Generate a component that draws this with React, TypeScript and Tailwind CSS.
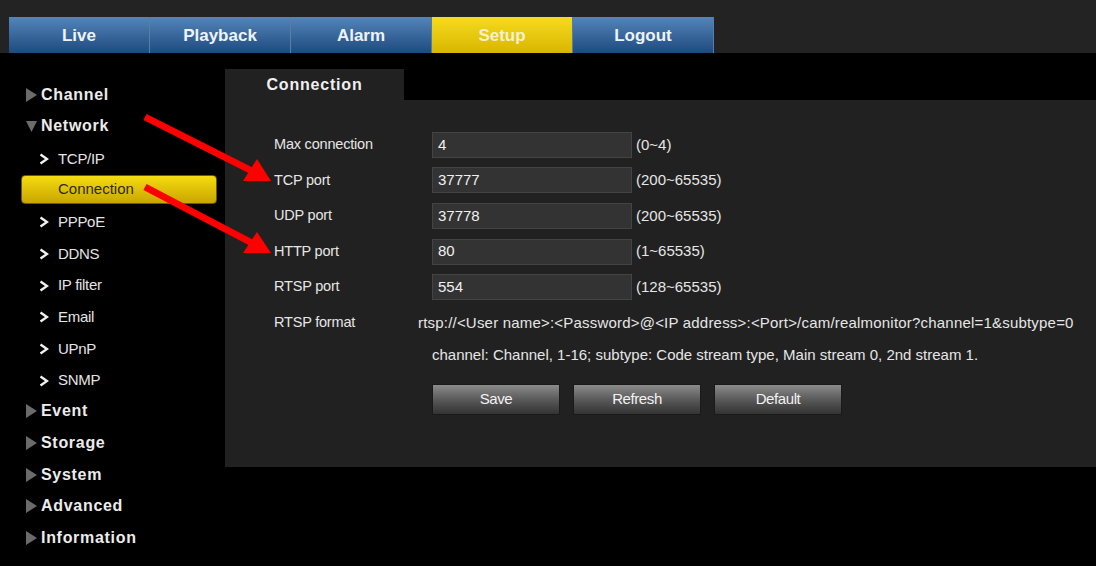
import React from "react";

const font = { fontFamily: '"Liberation Sans", Arial, sans-serif' };

const tabs = [
  { label: "Live", active: false },
  { label: "Playback", active: false },
  { label: "Alarm", active: false },
  { label: "Setup", active: true },
  { label: "Logout", active: false },
];

type NavItem = { label: string; level: 0 | 1; open?: boolean; active?: boolean };

const nav: NavItem[] = [
  { label: "Channel", level: 0 },
  { label: "Network", level: 0, open: true },
  { label: "TCP/IP", level: 1 },
  { label: "Connection", level: 1, active: true },
  { label: "PPPoE", level: 1 },
  { label: "DDNS", level: 1 },
  { label: "IP filter", level: 1 },
  { label: "Email", level: 1 },
  { label: "UPnP", level: 1 },
  { label: "SNMP", level: 1 },
  { label: "Event", level: 0 },
  { label: "Storage", level: 0 },
  { label: "System", level: 0 },
  { label: "Advanced", level: 0 },
  { label: "Information", level: 0 },
];

const fields = [
  { label: "Max connection", value: "4", range: "(0~4)" },
  { label: "TCP port", value: "37777", range: "(200~65535)" },
  { label: "UDP port", value: "37778", range: "(200~65535)" },
  { label: "HTTP port", value: "80", range: "(1~65535)" },
  { label: "RTSP port", value: "554", range: "(128~65535)" },
];

function Tri({ down }: { down?: boolean }) {
  return (
    <svg width="11" height="14" viewBox="0 0 11 14" className="shrink-0">
      {down ? (
        <polygon points="0,2 11,2 5.5,13" fill="#6b6b6b" />
      ) : (
        <polygon points="0,0 11,7 0,14" fill="#6b6b6b" />
      )}
    </svg>
  );
}

function Chevron() {
  return (
    <svg width="10" height="12" viewBox="0 0 10 12" className="shrink-0">
      <polyline points="1.5,1.5 8,6 1.5,10.5" fill="none" stroke="#f2f2f2" strokeWidth="2.4" />
    </svg>
  );
}

export default function App() {
  return (
    <div className="relative w-[1096px] h-[566px] bg-black overflow-hidden" style={font}>
      {/* Header */}
      <div className="h-[53px] bg-[#232323] pt-[17px] pl-[9px] flex">
        {tabs.map((t) => (
          <div
            key={t.label}
            className={
              "w-[141px] h-[36px] flex items-center justify-center pt-[2px] text-[17px] font-bold border-r border-[#5a7da6] " +
              (t.active
                ? "bg-gradient-to-b from-[#f6dc1c] to-[#d9b500] text-[#f4f0d0]"
                : "bg-gradient-to-b from-[#5585b8] to-[#1d4b80] text-[#eef3f8]")
            }
          >
            {t.label}
          </div>
        ))}
      </div>

      <div className="flex">
        {/* Sidebar */}
        <div className="w-[225px] pt-[26px] flex flex-col">
          {nav.map((n) =>
            n.level === 0 ? (
              <div key={n.label} className="h-[31.65px] flex items-center pl-[26px] gap-[4px]">
                <Tri down={n.open} />
                <span className="text-[16px] font-bold text-[#ececec] tracking-[0.7px]">{n.label}</span>
              </div>
            ) : n.active ? (
              <div key={n.label} className="h-[31.65px] flex items-center pl-[21px] pr-[8px]">
                <div className="w-[196px] h-[29px] rounded-[4px] bg-gradient-to-b from-[#f5dc10] to-[#c9a600] border border-[#6b5a00] flex items-center pl-[36px]">
                  <span className="text-[15px] text-[#2e2a10]">{n.label}</span>
                </div>
              </div>
            ) : (
              <div key={n.label} className="h-[31.65px] flex items-center pl-[39px] gap-[9px] pt-[2px]">
                <Chevron />
                <span className="text-[15px] text-[#e4e4e4] tracking-[-0.3px]">{n.label}</span>
              </div>
            )
          )}
        </div>

        {/* Content */}
        <div className="flex-1 pt-[16px]">
          <div className="w-[179px] h-[31px] bg-[#212121] flex items-center justify-center">
            <span className="text-[16px] font-bold text-[#f0f0f0] tracking-[0.8px]">Connection</span>
          </div>
          <div className="h-[367px] bg-[#212121] pl-[49px] pt-[27px] text-[#e6e6e6]">
            {fields.map((f) => (
              <div key={f.label} className="h-[35.6px] flex items-center">
                <div className="w-[158px] text-[14.5px] tracking-[-0.2px]">{f.label}</div>
                <div className="w-[200px] h-[26px] bg-[#333333] border border-[#444444] flex items-center pl-[5px] text-[15px] text-[#f0f0f0]">
                  {f.value}
                </div>
                <div className="pl-[4px] text-[15px]">{f.range}</div>
              </div>
            ))}
            <div className="h-[35.6px] flex items-center">
              <div className="w-[144px] text-[14.5px] tracking-[-0.2px]">RTSP format</div>
              <div className="text-[15px] tracking-[0.2px] whitespace-nowrap">
                rtsp://&lt;User name&gt;:&lt;Password&gt;@&lt;IP address&gt;:&lt;Port&gt;/cam/realmonitor?channel=1&amp;subtype=0
              </div>
            </div>
            <div className="h-[29px] flex items-center pl-[158px] text-[15px] whitespace-nowrap">
              channel: Channel, 1-16; subtype: Code stream type, Main stream 0, 2nd stream 1.
            </div>
            <div className="pl-[158px] pt-[14px] flex gap-[13px]">
              {["Save", "Refresh", "Default"].map((b) => (
                <div
                  key={b}
                  className="w-[128px] h-[31px] bg-gradient-to-b from-[#8c8c8c] via-[#5a5a5a] to-[#333333] border border-[#1a1a1a] flex items-center justify-center text-[15px] text-[#f2f2f2] tracking-[-0.4px]"
                >
                  {b}
                </div>
              ))}
            </div>
          </div>
        </div>
      </div>

      {/* Red annotation arrows */}
      <svg className="absolute inset-0 pointer-events-none" width="1096" height="566" viewBox="0 0 1096 566">
        <line x1="145" y1="117" x2="252" y2="171" stroke="#ff0000" strokeWidth="7" />
        <polygon points="257,159 243,181 271,181" fill="#ff0000" />
        <line x1="145" y1="187" x2="252" y2="243" stroke="#ff0000" strokeWidth="7" />
        <polygon points="257,232 243,253 271,253" fill="#ff0000" />
      </svg>
    </div>
  );
}
